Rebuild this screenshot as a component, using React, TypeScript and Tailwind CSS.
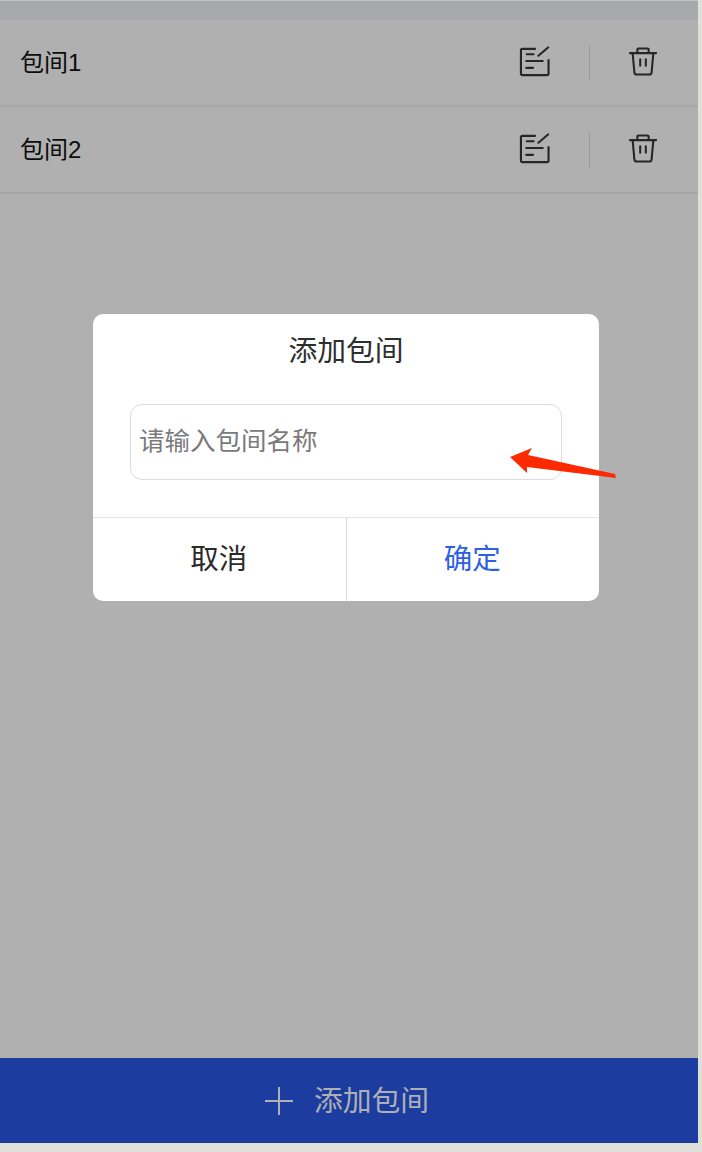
import React from 'react';

const fontStack = "font-['Liberation_Sans','Noto_Sans_CJK_SC',sans-serif]";

const EditIcon = () => (
  <svg className="mb-[2px]" width="31" height="32" viewBox="0 0 32 32" fill="none" stroke="#262626" strokeWidth="2.200" strokeLinecap="round" strokeLinejoin="round">
    <path d="M16.500 2.500H3.500a1.500 1.500 0 0 0-1.500 1.500V28a1.500 1.500 0 0 0 1.500 1.500H29a1.500 1.500 0 0 0 1.500-1.500V14" />
    <path d="M8 8h7" />
    <path d="M7.500 15h17" />
    <path d="M7.500 22h7" />
    <path d="M20 9.500L30 1" />
  </svg>
);

const TrashIcon = () => (
  <svg width="30" height="32" viewBox="0 0 32 32" fill="none" stroke="#262626" strokeWidth="2.200" strokeLinecap="round" strokeLinejoin="round">
    <path d="M2 6.500h28" />
    <path d="M10 6V2.500a1 1 0 0 1 1-1h10a1 1 0 0 1 1 1V6" />
    <path d="M5 7l1.800 20a2.500 2.500 0 0 0 2.500 2.300h13.400a2.500 2.500 0 0 0 2.500-2.300L27 7" />
    <path d="M13 13v7" />
    <path d="M19 13v7" />
  </svg>
);

const rows = ['包间1', '包间2'];

export default function App() {
  return (
    <div className={`relative h-[1152px] w-[702px] overflow-hidden bg-[#dfdfda] ${fontStack}`}>
      <div className="flex h-[1143px] w-[698px] flex-col bg-[#b0b0b0]">
        <div className="h-[20px] shrink-0 border-t border-[#c4c4c6] bg-[#a8a9ad]" />
        {rows.map((name) => (
          <div key={name} className="flex h-[87px] shrink-0 items-center justify-between border-b-2 border-[#a6a6a6] pl-[20px]">
            <span className="text-[24px] leading-none text-[#0c0c0c]">{name}</span>
            <div className="flex items-center">
              <EditIcon />
              <div className="ml-[39px] h-[36px] w-px bg-[#9c9c9c]" />
              <div className="mr-[40px] mb-[1px] ml-[38px]">
                <TrashIcon />
              </div>
            </div>
          </div>
        ))}
        <div className="flex-1" />
        <div className="flex h-[85px] shrink-0 items-center justify-center gap-[21px] bg-[#1d3c9f] pr-[4px] text-[#aeb0b5]">
          <svg width="28" height="28" viewBox="0 0 28 28" stroke="#aeb0b5" strokeWidth="2">
            <path d="M0 14h28M14 0v28" />
          </svg>
          <span className="pt-[2px] text-[28.800px] leading-none">添加包间</span>
        </div>
      </div>

      {/* dialog sits over the list */}
      <div className="absolute top-[314px] left-[93px] flex h-[287px] w-[506px] flex-col rounded-[10px] bg-white">
        <div className="flex h-[72px] items-center justify-center pt-[2px] text-[28.800px] leading-none text-[#2e2e2e]">添加包间</div>
        <div className="mx-[37px] mt-[18px] flex h-[76px] items-center rounded-[12px] border border-[#dcdcdc] pl-[8px] text-[25.500px] leading-none text-[#7a7a7a]">
          请输入包间名称
        </div>
        <div className="mt-[37px] flex flex-1 border-t border-[#e6e6e6]">
          <div className="flex flex-1 items-center justify-center pr-[1px] text-[28.500px] leading-none text-[#2a2a2a]">取消</div>
          <div className="flex flex-1 items-center justify-center border-l border-[#d8d8d8] pr-[1px] text-[28.500px] leading-none text-[#2f5fe3]">确定</div>
        </div>
      </div>

      {/* red annotation arrow */}
      <svg className="absolute top-[445px] left-[505px]" width="115" height="36" viewBox="0 0 115 36">
        <path d="M5 12L27 3L23 10L110 29L111 33L22 22L22 28Z" fill="#fc2a00" />
      </svg>
    </div>
  );
}
